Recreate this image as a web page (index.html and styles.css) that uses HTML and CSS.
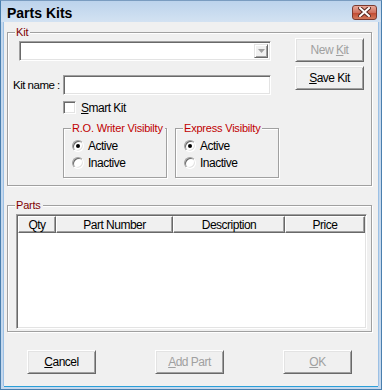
FILE: index.html
```html
<!DOCTYPE html>
<html lang="en">
<head>
  <meta charset="UTF-8" />
  <title>Parts Kits</title>
  <link rel="stylesheet" href="styles.css">
</head>
<body>

  <div class="window">
    <!-- Title bar -->
    <div class="titlebar">
      <span class="title">Parts Kits</span>
      <span class="close">
        <svg width="13" height="10" viewBox="0 0 13 10">
          <path d="M2 1 L11 9 M11 1 L2 9" stroke="#5a2a22" stroke-width="4" stroke-linecap="square"/>
          <path d="M2 1 L11 9 M11 1 L2 9" stroke="#fff" stroke-width="2" stroke-linecap="square"/>
        </svg>
      </span>
    </div>

    <div class="client">
      <!-- Kit group -->
      <div class="group kit-group">
        <span class="legend dark">Kit</span>
        <div class="kit-body">
          <div class="kit-left">
            <div class="combo">
              <span class="combo-btn">
                <svg width="7" height="4" viewBox="0 0 7 4"><path d="M0 0 H7 L3.5 4 Z" fill="#a0a0a0"/></svg>
              </span>
            </div>
            <div class="name-row">
              <span class="name-label">Kit name :</span>
              <span class="field"></span>
            </div>
            <div class="check-row">
              <span class="checkbox"></span>
              <span><u>S</u>mart Kit</span>
            </div>
            <div class="vis-row">
              <div class="group vis-group">
                <span class="legend bright">R.O. Writer Visibilty</span>
                <div class="radio-row"><span class="radio checked"></span><span>Active</span></div>
                <div class="radio-row"><span class="radio"></span><span>Inactive</span></div>
              </div>
              <div class="group vis-group">
                <span class="legend bright">Express Visibilty</span>
                <div class="radio-row"><span class="radio checked"></span><span>Active</span></div>
                <div class="radio-row"><span class="radio"></span><span>Inactive</span></div>
              </div>
            </div>
          </div>
          <div class="kit-buttons">
            <span class="btn disabled"><span>New <u>K</u>it</span></span>
            <span class="btn"><span><u>S</u>ave Kit</span></span>
          </div>
        </div>
      </div>

      <!-- Parts group -->
      <div class="group parts-group">
        <span class="legend dark">Parts</span>
        <div class="list">
          <div class="list-head">
            <span class="col col-qty">Qty</span>
            <span class="col col-num">Part Number</span>
            <span class="col col-desc">Description</span>
            <span class="col col-price">Price</span>
          </div>
        </div>
      </div>

      <div class="footer">
        <span class="btn"><span><u>C</u>ancel</span></span>
        <span class="btn disabled"><span><u>A</u>dd Part</span></span>
        <span class="btn disabled"><span><u>O</u>K</span></span>
      </div>
    </div>
  </div>

</body>
</html>
```

FILE: styles.css
```css
body {
  margin: 0;
  font-family: "Liberation Sans", Arial, sans-serif;
  font-size: 11px;
  letter-spacing: -0.2px;
  color: #000;
  background: #f0f0f0;
}

.window {
  width: 382px;
  height: 390px;
  box-sizing: border-box;
  border: 1px solid #4a7fae;
  border-top-color: #7a9cc0;
  background: #c4d8ee;
  display: flex;
  flex-direction: column;
}

.titlebar {
  height: 21px;
  display: flex;
  align-items: center;
  padding-left: 6px;
  padding-right: 4px;
  background: linear-gradient(#bcd3ec, #d3e2f2);
}

.title {
  font-size: 14px;
  font-weight: bold;
  letter-spacing: 0;
  margin-top: 2px;
}

.close {
  margin-left: auto;
  width: 23px;
  height: 13px;
  border: 1px solid #7b3a30;
  border-radius: 3px;
  background: linear-gradient(#e9a99a, #d0715f 50%, #c0472f 51%, #d37a5d);
  display: flex;
  align-items: center;
  justify-content: center;
  margin-top: 1px;
}

.client {
  flex: 1;
  margin: 0 3px 3px 3px;
  background: #f0f0f0;
  border-bottom: 1px solid #f0f0f0;
  box-shadow: 0 1px 0 #2a9fd8, -1px 0 0 #9cc0e4, 1px 0 0 #9cc0e4;
}

/* group boxes */
.group {
  position: relative;
  border: 1px solid #a0a0a0;
  box-shadow: inset 1px 1px 0 #fff, 1px 1px 0 #fff;
}

.legend {
  position: absolute;
  top: -7px;
  left: 7px;
  padding: 0 2px 0 1px;
  line-height: 13px;
  background: #f0f0f0;
  white-space: nowrap;
}

.legend.dark {
  color: #800000;
}

.legend.bright {
  color: #c00000;
}

.kit-group {
  margin: 10px 6px 0 3px;
  padding: 5px 0 7px 0;
}

.kit-body {
  display: flex;
}

.combo {
  margin: 3px 0 0 11px;
  width: 252px;
  height: 20px;
  box-sizing: border-box;
  background: #fff;
  border: 1px solid;
  border-color: #a0a0a0 #fff #fff #a0a0a0;
  box-shadow: inset 1px 1px 0 #696969, inset -1px -1px 0 #e3e3e3;
  display: flex;
  justify-content: flex-end;
  padding: 2px;
}

.combo-btn {
  width: 14px;
  height: 14px;
  box-sizing: border-box;
  background: #f0f0f0;
  border: 1px solid;
  border-color: #e3e3e3 #696969 #696969 #e3e3e3;
  box-shadow: inset 1px 1px 0 #fff, inset -1px -1px 0 #a0a0a0;
  display: flex;
  align-items: center;
  justify-content: center;
}

.name-row {
  margin-top: 14px;
  display: flex;
  align-items: center;
  height: 20px;
  font-size: 11.5px;
  letter-spacing: -0.5px;
}

.name-label {
  margin-left: 5px;
  width: 50px;
}

.field {
  width: 208px;
  height: 20px;
  box-sizing: border-box;
  background: #fff;
  border: 1px solid;
  border-color: #a0a0a0 #fff #fff #a0a0a0;
  box-shadow: inset 1px 1px 0 #696969, inset -1px -1px 0 #e3e3e3;
}

.check-row {
  margin: 6px 0 0 55px;
  display: flex;
  align-items: center;
  gap: 5px;
  height: 13px;
  font-size: 12px;
  letter-spacing: -0.5px;
}

.checkbox {
  width: 13px;
  height: 13px;
  box-sizing: border-box;
  background: #fff;
  border: 1px solid;
  border-color: #a0a0a0 #fff #fff #a0a0a0;
  box-shadow: inset 1px 1px 0 #696969, inset -1px -1px 0 #e3e3e3;
}

.vis-row {
  margin: 14px 0 0 55px;
  display: flex;
  gap: 8px;
}

.vis-group {
  width: 104px;
  height: 50px;
  box-sizing: border-box;
  padding: 8px 0 0 8px;
}

.radio-row {
  height: 17px;
  display: flex;
  align-items: center;
  gap: 4px;
  font-size: 12px;
  letter-spacing: -0.5px;
}

.radio {
  position: relative;
  width: 12px;
  height: 12px;
  box-sizing: border-box;
  border-radius: 50%;
  background: #fff;
  border: 1px solid;
  border-color: #a0a0a0 #fff #fff #a0a0a0;
  box-shadow: inset 1px 1px 0 #696969, inset -1px -1px 0 #e3e3e3;
}

.radio.checked::after {
  content: "";
  position: absolute;
  left: 3px;
  top: 3px;
  width: 4px;
  height: 4px;
  border-radius: 50%;
  background: #000;
}

.kit-buttons {
  margin-left: auto;
  margin-right: 7px;
  display: flex;
  flex-direction: column;
  gap: 4px;
}

/* buttons */
.btn {
  width: 69px;
  height: 24px;
  box-sizing: border-box;
  display: flex;
  align-items: center;
  justify-content: center;
  font-size: 12px;
  letter-spacing: -0.5px;
  background: #f0f0f0;
  border: 1px solid;
  border-color: #fff #696969 #696969 #fff;
  box-shadow: inset 1px 1px 0 #e3e3e3, inset -1px -1px 0 #a0a0a0;
}

.btn.disabled {
  color: #a0a0a0;
}

/* parts list */
.parts-group {
  margin: 19px 6px 0 3px;
  padding: 8px 4px 2px 8px;
}

.list {
  height: 115px;
  box-sizing: border-box;
  background: #fff;
  border: 1px solid;
  border-color: #a0a0a0 #fff #fff #a0a0a0;
  box-shadow: inset 1px 1px 0 #696969, inset -1px -1px 0 #e3e3e3;
  padding: 1px 1px 0 1px;
}

.list-head {
  display: flex;
  height: 17px;
}

.col {
  box-sizing: border-box;
  display: flex;
  align-items: center;
  justify-content: center;
  font-size: 12px;
  letter-spacing: -0.5px;
  background: #f0f0f0;
  border: 1px solid;
  border-color: #fff #696969 #696969 #fff;
  box-shadow: inset -1px -1px 0 #a0a0a0;
}

.col-qty {
  width: 38px;
}

.col-num {
  width: 117px;
}

.col-desc {
  width: 112px;
}

.col-price {
  flex: 1;
}

.footer {
  margin: 18px 0 0 23px;
  display: flex;
  gap: 59px;
}
```
